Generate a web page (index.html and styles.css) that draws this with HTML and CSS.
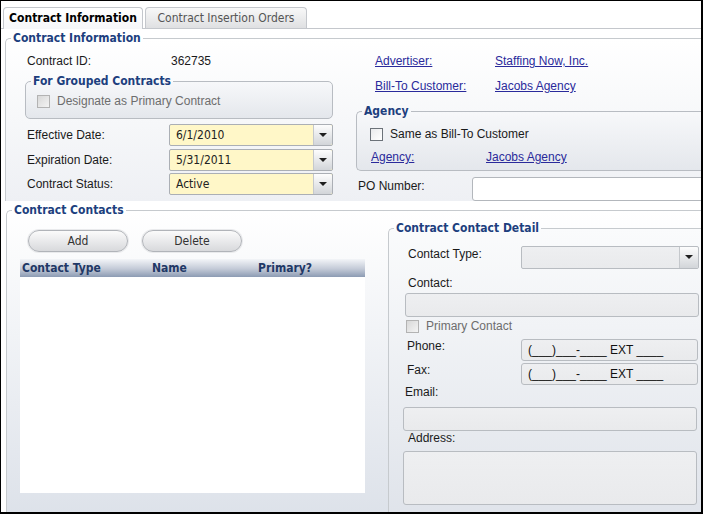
FILE: index.html
```html
<!DOCTYPE html>
<html lang="en">
<head>
  <meta charset="UTF-8" />
  <title>Contract Information</title>
  <link rel="stylesheet" href="styles.css">
</head>
<body>
<div class="window">
  <div class="tabs">
    <div class="tab active">Contract Information</div>
    <div class="tab">Contract Insertion Orders</div>
  </div>

  <div class="panel">
    <fieldset class="group info">
      <legend>Contract Information</legend>
      <div class="info-body">

        <div class="col-left">
          <div class="id-row"><span class="label">Contract ID:</span><span>362735</span></div>

          <fieldset class="box grouped">
            <legend>For Grouped Contracts</legend>
            <div class="grouped-inner">
              <div class="check disabled"><span class="checkbox"></span>Designate as Primary Contract</div>
            </div>
          </fieldset>

          <div class="field-row first">
            <span class="label">Effective Date:</span>
            <div class="combo yellow"><span class="combo-text">6/1/2010</span><span class="combo-btn"></span></div>
          </div>
          <div class="field-row second">
            <span class="label">Expiration Date:</span>
            <div class="combo yellow"><span class="combo-text">5/31/2011</span><span class="combo-btn"></span></div>
          </div>
          <div class="field-row third">
            <span class="label">Contract Status:</span>
            <div class="combo yellow"><span class="combo-text">Active</span><span class="combo-btn"></span></div>
          </div>
        </div>

        <div class="col-right">
          <div class="link-row"><a href="#" class="link-label">Advertiser:</a><a href="#">Staffing Now, Inc.</a></div>
          <div class="link-row second"><a href="#" class="link-label">Bill-To Customer:</a><a href="#">Jacobs Agency</a></div>

          <fieldset class="box agency">
            <legend>Agency</legend>
            <div class="agency-inner">
              <div class="check"><span class="checkbox"></span>Same as Bill-To Customer</div>
              <div class="agency-row"><a href="#" class="link-label">Agency:</a><a href="#">Jacobs Agency</a></div>
            </div>
          </fieldset>

          <div class="po-row">
            <span class="label">PO Number:</span>
            <div class="textbox"></div>
          </div>
        </div>

      </div>
    </fieldset>

    <fieldset class="group contacts">
      <legend>Contract Contacts</legend>
      <div class="contacts-body">

        <div class="contacts-list">
          <div class="buttons">
            <button class="pill">Add</button>
            <button class="pill delete">Delete</button>
          </div>
          <div class="grid">
            <div class="grid-head">
              <span class="col-type">Contact Type</span>
              <span class="col-name">Name</span>
              <span>Primary?</span>
            </div>
            <div class="grid-body"></div>
          </div>
        </div>

        <fieldset class="group detail">
          <legend>Contract Contact Detail</legend>
          <div class="detail-inner">
            <div class="detail-row type-row">
              <span class="label">Contact Type:</span>
              <div class="combo gray"><span class="combo-text"></span><span class="combo-btn"></span></div>
            </div>
            <div class="plain-label contact-label">Contact:</div>
            <div class="textbox gray contact-box"></div>
            <div class="check disabled primary"><span class="checkbox"></span>Primary Contact</div>
            <div class="detail-row phone-row">
              <span class="label">Phone:</span>
              <div class="textbox gray mask">(___)___-____ EXT ____</div>
            </div>
            <div class="detail-row fax-row">
              <span class="label">Fax:</span>
              <div class="textbox gray mask">(___)___-____ EXT ____</div>
            </div>
            <div class="plain-label email-label">Email:</div>
            <div class="textbox gray wide email-box"></div>
            <div class="plain-label address-label">Address:</div>
            <div class="textbox gray wide address-box"></div>
          </div>
        </fieldset>

      </div>
    </fieldset>
  </div>
</div>
</body>
</html>
```

FILE: styles.css
```css
body {
    margin: 0;
    background: #fff;
    font-family: "Liberation Sans", Arial, sans-serif;
    font-size: 12px;
    color: #1a1a1a;
}

.window {
    width: 703px;
    height: 514px;
    box-sizing: border-box;
    border: 1px solid #000;
    border-right-width: 2px;
    border-bottom-width: 2px;
    overflow: hidden;
    background: #fff;
}

/* tabs */
.tabs {
    display: flex;
    align-items: flex-end;
    height: 27px;
    padding-left: 2px;
    border-bottom: 1px solid #c4c7cc;
}
.tab {
    height: 20px;
    line-height: 20px;
    border: 1px solid #c4c7cc;
    border-bottom: none;
    border-radius: 4px 4px 0 0;
    font-family: "DejaVu Sans Condensed", "DejaVu Sans", sans-serif;
    font-size: 12px;
    text-align: center;
    margin-right: 2px;
    width: 160px;
    color: #555;
    background: linear-gradient(#f8f8f8, #dfe0e2);
}
.tab.active {
    width: 138px;
    color: #000;
    font-weight: bold;
    background: linear-gradient(#fff, #f6f7f9);
    margin-bottom: -1px;
    height: 21px;
}

/* fieldsets */
fieldset {
    margin: 0;
    padding: 0;
    min-width: 0;
}
legend {
    font-family: "DejaVu Sans Condensed", "DejaVu Sans", sans-serif;
    font-weight: bold;
    font-size: 12px;
    line-height: 14px;
    color: #1d3f7e;
    padding: 0 2px;
    margin-left: 5px;
}
.group {
    border: 1px solid #c6cace;
    border-right: none;
    border-bottom: none;
    border-radius: 5px 0 0 0;
}
.box {
    border: 1px solid #b8bcc2;
    border-radius: 5px;
    background: linear-gradient(#f7f8fa, #e4e7ec);
}

.info {
    margin: 2px 0 0 4px;
    background: linear-gradient(#fff, #eef0f4);
}
.info-body {
    display: flex;
}
.col-left {
    width: 308px;
    padding-left: 19px;
}
.col-right {
    flex: 1;
    margin-left: 23px;
}

.id-row {
    display: flex;
    margin-top: 8px;
    height: 16px;
    line-height: 16px;
}
.id-row .label {
    width: 146px;
    padding-left: 2px;
    box-sizing: border-box;
}

.grouped {
    margin-top: 5px;
}
.grouped-inner {
    padding: 6px 0 10px 11px;
}

.check {
    display: flex;
    align-items: center;
    height: 14px;
    line-height: 14px;
}
.checkbox {
    width: 11px;
    height: 11px;
    border: 1px solid #6c7279;
    background: linear-gradient(135deg, #e9eaec, #fff);
    margin-right: 7px;
}
.check.disabled {
    color: #6d6d6d;
}
.check.disabled .checkbox {
    border-color: #b3b3b3;
    background: linear-gradient(135deg, #d8d8d8, #f4f4f4);
}

.field-row {
    display: flex;
    height: 22px;
}
.field-row.first { margin-top: 5px; }
.field-row.second { margin-top: 3px; }
.field-row.third { margin-top: 2px; }
.field-row .label {
    width: 144px;
    padding-left: 2px;
    box-sizing: border-box;
    line-height: 22px;
}

.combo {
    display: flex;
    box-sizing: border-box;
    border: 1px solid #abafb5;
    border-radius: 2px;
    height: 22px;
}
.combo.yellow {
    width: 164px;
    background: #fff7c8;
}
.combo.gray {
    width: 178px;
    height: 23px;
    background: linear-gradient(#eeeff1, #e9eaec);
    border-color: #b8bcc1;
}
.combo-text {
    flex: 1;
    padding-left: 6px;
    line-height: 20px;
    font-family: "DejaVu Sans Condensed", "DejaVu Sans", sans-serif;
    color: #222;
}
.combo-btn {
    width: 18px;
    border-left: 1px solid #c5c8cc;
    border-radius: 0 2px 2px 0;
    background: linear-gradient(#fdfdfd, #d2d5d9);
    position: relative;
}
.combo-btn::after {
    content: "";
    position: absolute;
    left: 5px;
    top: 8px;
    border-left: 4px solid transparent;
    border-right: 4px solid transparent;
    border-top: 4px solid #1f1f1f;
}

a {
    color: #2a2a9b;
    text-decoration: underline;
}
.link-row {
    display: flex;
    margin-top: 8px;
    height: 16px;
    line-height: 16px;
    padding-left: 19px;
}
.link-row.second { margin-top: 9px; }
.link-row .link-label {
    width: 120px;
}

.agency {
    margin-top: 10px;
    border-right: none;
    border-radius: 5px 0 0 5px;
}
.agency-inner {
    padding: 9px 0 6px 13px;
}
.agency-row {
    display: flex;
    margin-top: 9px;
    height: 14px;
    line-height: 14px;
    padding-left: 1px;
}
.agency-row .link-label {
    width: 115px;
}

.po-row {
    display: flex;
    margin-top: 6px;
    height: 24px;
}
.po-row .label {
    width: 116px;
    padding-left: 2px;
    box-sizing: border-box;
    line-height: 19px;
}
.textbox {
    box-sizing: border-box;
    border: 1px solid #b3b7bc;
    border-radius: 3px;
    background: #fff;
}
.po-row .textbox {
    flex: 1;
    margin-right: -10px;
}

/* contacts */
.contacts {
    margin: 2px 0 0 5px;
    height: 320px;
    background: linear-gradient(#fff, #dce1e9);
}
.contacts-body {
    display: flex;
}
.contacts-list {
    width: 381px;
}
.buttons {
    display: flex;
    margin: 13px 0 0 21px;
}
.pill {
    width: 100px;
    height: 22px;
    border: 1px solid #b1b4b9;
    border-radius: 11px;
    background: linear-gradient(#fbfbfb, #d8d9dc);
    box-shadow: 0 0 0 1px #e9eaec;
    font-family: "DejaVu Sans Condensed", "DejaVu Sans", sans-serif;
    font-size: 12px;
    color: #333;
    padding: 0;
}
.pill.delete {
    margin-left: 14px;
}
.grid {
    margin: 7px 0 0 13px;
    width: 345px;
}
.grid-head {
    display: flex;
    height: 18px;
    line-height: 18px;
    padding-left: 2px;
    background: linear-gradient(#f3f5f8, #c3cad7 55%, #8c9bb3);
    font-family: "DejaVu Sans Condensed", "DejaVu Sans", sans-serif;
    font-weight: bold;
    color: #1f3866;
}
.col-type { width: 130px; }
.col-name { width: 106px; }
.grid-body {
    height: 216px;
    background: #fff;
}

.detail {
    flex: 1;
    margin-top: 4px;
    height: 300px;
    background: linear-gradient(#fafbfc, #dfe3ea);
}
.detail-inner {
    padding: 11px 0 0 15px;
}
.detail-row {
    display: flex;
}
.detail-row .label {
    width: 113px;
    margin-left: 4px;
}
.type-row {
    height: 23px;
}
.type-row .label {
    line-height: 17px;
}
.plain-label {
    height: 14px;
    line-height: 14px;
    margin-left: 4px;
}
.contact-label { margin-top: 7px; }
.contact-box {
    margin: 3px 0 0 1px;
    width: 294px;
    height: 24px;
}
.check.primary {
    margin: 2px 0 0 2px;
}
.phone-row { margin-top: 6px; height: 22px; }
.fax-row { margin-top: 2px; height: 22px; }
.phone-row .label,
.fax-row .label {
    margin-left: 3px;
    width: 114px;
    line-height: 14px;
}
.textbox.gray {
    background: linear-gradient(#eeeff1, #e9eaec);
    border-color: #b8bcc1;
}
.mask {
    width: 177px;
    height: 22px;
    line-height: 20px;
    padding-left: 6px;
    color: #111;
}
.email-label { margin-left: 1px; }
.wide {
    width: 294px;
    margin-left: -1px;
}
.email-box {
    margin-top: 8px;
    height: 24px;
}
.address-box {
    margin-top: 6px;
    height: 54px;
}
```
